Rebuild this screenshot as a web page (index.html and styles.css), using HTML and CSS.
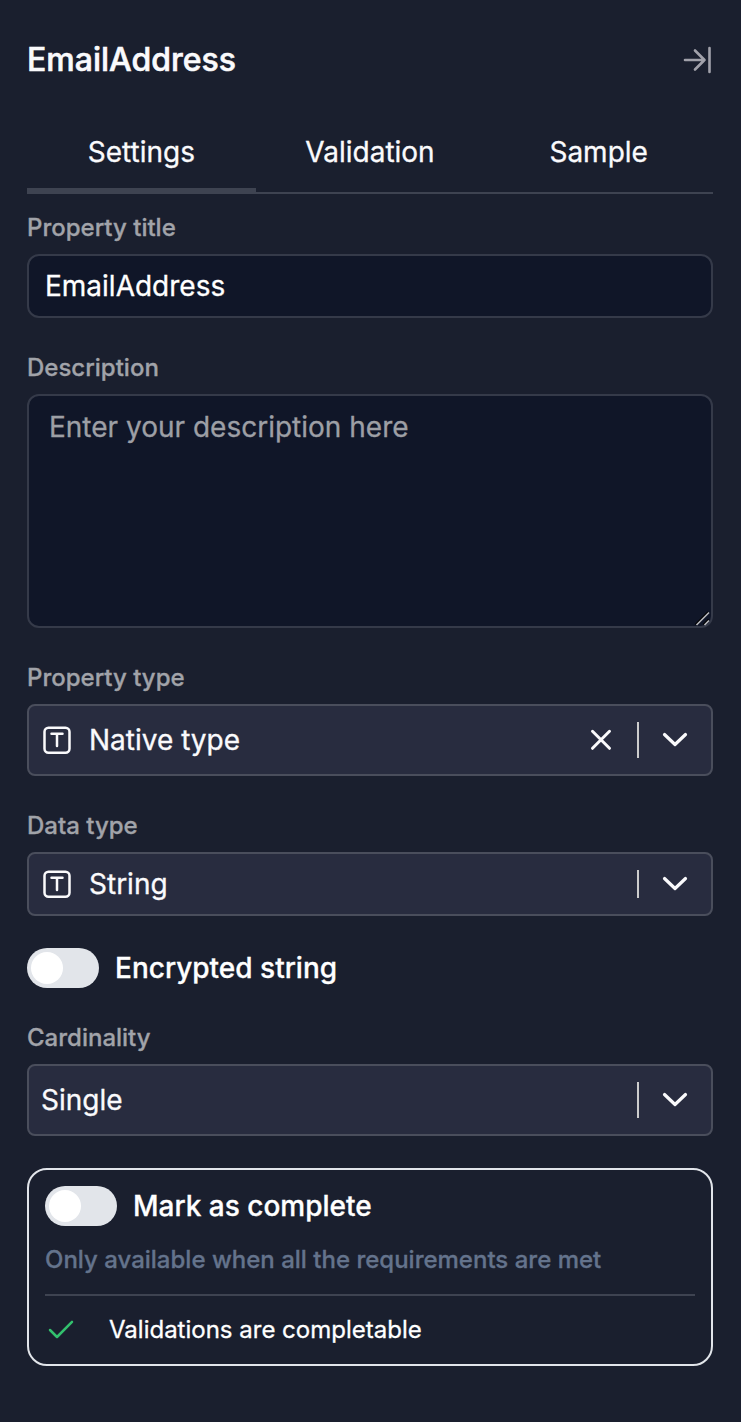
FILE: index.html
```html
<!DOCTYPE html>
<html lang="en">
<head>
<meta charset="utf-8">
<title>EmailAddress</title>
<link rel="stylesheet" href="styles.css">
</head>
<body>
<main class="panel">
  <header class="header">
    <h1 class="title">EmailAddress</h1>
    <svg class="collapse" width="32" height="32" viewBox="0 0 32 32"><path d="M4 16H23.500M14 6.500L23.500 16L14 25.500M28.500 4V28"/></svg>
  </header>
  <nav class="tabs">
    <a class="tab tab-active">Settings</a>
    <a class="tab">Validation</a>
    <a class="tab">Sample</a>
  </nav>

  <section class="field">
    <label class="label" for="title">Property title</label>
    <input class="input" id="title" value="EmailAddress">
  </section>

  <section class="field">
    <label class="label" for="description">Description</label>
    <div class="area-wrap">
      <textarea class="area" id="description" placeholder="Enter your description here"></textarea>
      <svg class="grip" width="18" height="18" viewBox="0 0 18 18"><path class="grip-shadow" d="M2.500 14.500L15 2M10.500 14.500L15.500 9.500"/><path d="M3.500 15L16 2.500M11.500 15L16 10.500"/></svg>
    </div>
  </section>

  <section class="field">
    <span class="label">Property type</span>
    <div class="select select-tall">
      <svg class="type-icon" width="32" height="32" viewBox="0 0 32 32"><rect x="4.500" y="3.700" width="25" height="25" rx="4"/><path d="M11.500 9.800H22.500M17 9.800V22"/></svg>
      <span class="value">Native type</span>
      <svg class="clear" width="24" height="24" viewBox="0 0 24 24"><path d="M3.500 3.300L20.500 20.300M20.500 3.300L3.500 20.300"/></svg>
      <span class="divider"></span>
      <svg class="chevron" width="28" height="28" viewBox="0 0 28 28"><path d="M3.500 8.500L14 18.500L24.500 8.500"/></svg>
    </div>
  </section>

  <section class="field field-data">
    <span class="label">Data type</span>
    <div class="select">
      <svg class="type-icon" width="32" height="32" viewBox="0 0 32 32"><rect x="4.500" y="3.700" width="25" height="25" rx="4"/><path d="M11.500 9.800H22.500M17 9.800V22"/></svg>
      <span class="value">String</span>
      <span class="divider"></span>
      <svg class="chevron" width="28" height="28" viewBox="0 0 28 28"><path d="M3.500 8.500L14 18.500L24.500 8.500"/></svg>
    </div>
  </section>

  <div class="toggle-row">
    <span class="switch"><span class="knob"></span></span>
    <span class="toggle-text">Encrypted string</span>
  </div>

  <section class="field field-cardinality">
    <span class="label">Cardinality</span>
    <div class="select select-tall">
      <span class="value value-plain">Single</span>
      <span class="divider"></span>
      <svg class="chevron" width="28" height="28" viewBox="0 0 28 28"><path d="M3.500 8.500L14 18.500L24.500 8.500"/></svg>
    </div>
  </section>

  <section class="card">
    <div class="toggle-row">
      <span class="switch"><span class="knob"></span></span>
      <span class="toggle-text">Mark as complete</span>
    </div>
    <p class="hint">Only available when all the requirements are met</p>
    <div class="check-row">
      <svg class="check" width="32" height="32" viewBox="0 0 32 32"><path d="M5 16L12 23L27 7.800"/></svg>
      <span>Validations are completable</span>
    </div>
  </section>
</main>
</body>
</html>
```
FILE: styles.css
```css
* { box-sizing: border-box; }
body {
  margin: 0;
  background: #1a1f2e;
  color: #fafafc;
  font-family: Inter, "Liberation Sans", sans-serif;
  font-size: 28px;
  line-height: 40px;
  -webkit-text-stroke: 0.3px;
}
svg {
  flex: none;
  fill: none;
  stroke: currentColor;
  stroke-width: 2.5;
  stroke-linecap: round;
  stroke-linejoin: round;
}
.panel { min-height: 1422px; padding: 40px 28px 0 27px; }
.header { display: flex; align-items: center; justify-content: space-between; height: 40px; }
.title { margin: 0; font-size: 32px; font-weight: 500; -webkit-text-stroke: 0.6px; }
.collapse { color: #a1a1aa; stroke-width: 2.6; }
.tabs {
  display: grid;
  grid-template-columns: repeat(3, 1fr);
  height: 82px;
  margin-top: 32px;
  border-bottom: 2px solid #3e4351;
}
.tab { height: 82px; padding-top: 20px; text-align: center; }
.tab-active { border-bottom: 6px solid #3e4351; }
.field { display: flex; flex-direction: column; margin-bottom: 34px; }
.tabs + .field { margin-top: 18px; }
.label {
  margin-bottom: 10px;
  color: #a1a3a9;
  font-size: 24px;
  font-weight: 500;
  line-height: 32px;
}
.input, .area {
  display: block;
  width: 100%;
  border: 2px solid #353a49;
  border-radius: 12px;
  background: #101628;
  color: #fff;
  font: inherit;
  outline: none;
}
.input { height: 64px; padding: 0 16px; }
.area-wrap { position: relative; }
.area { height: 234px; padding: 11px 20px; resize: none; }
.area::placeholder { color: #9d9fa5; opacity: 1; }
.grip { position: absolute; right: 2px; bottom: 0; color: #b7b8bc; stroke-width: 1.6; stroke-linecap: butt; }
.grip-shadow { stroke: #000; }
.select {
  display: flex;
  align-items: center;
  height: 64px;
  padding: 0 22px 0 11px;
  border: 2px solid #4a4e5c;
  border-radius: 8px;
  background: #282c3f;
}
.select-tall { height: 72px; }
.value { flex: 1; margin-left: 17px; }
.value-plain { margin-left: 1px; }
.clear { margin-right: 24px; stroke-width: 3; }
.divider { align-self: stretch; width: 2px; margin: 16px 22px 16px 0; background: #ccc; }
.chevron { stroke-width: 3.2; }
.field-data { margin-bottom: 32px; }
.toggle-row { display: flex; align-items: center; gap: 16px; height: 40px; color: #fff; font-weight: 500; }
.switch { display: flex; width: 72px; height: 40px; padding: 4px; border-radius: 20px; background: #e2e5ea; }
.knob { width: 32px; height: 32px; border-radius: 50%; background: #fff; }
.field-cardinality { margin: 34px 0 32px; }
.card { height: 198px; padding: 16px; border: 2px solid #e2e5ea; border-radius: 20px; }
.hint {
  height: 70px;
  margin: 0;
  padding-top: 18px;
  border-bottom: 2px solid #3e4351;
  color: #64738c;
  font-size: 24px;
  font-weight: 500;
  line-height: 32px;
}
.check-row { display: flex; align-items: center; gap: 32px; margin-top: 18px; color: #fff; font-size: 24px; line-height: 32px; }
.check { color: #33c06e; }
```
